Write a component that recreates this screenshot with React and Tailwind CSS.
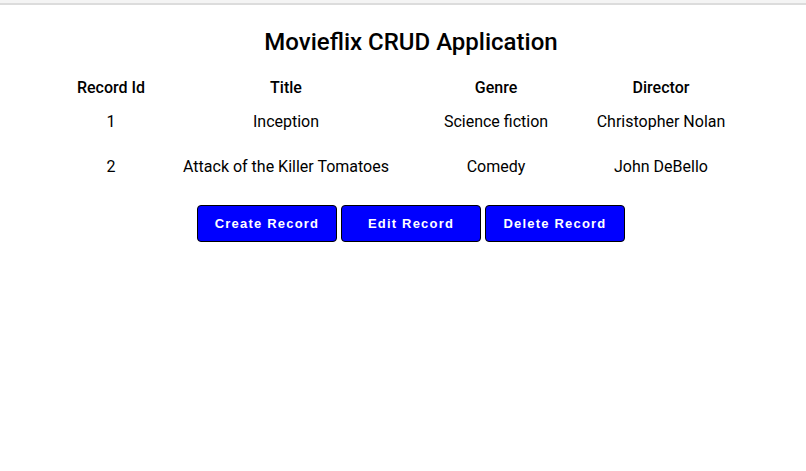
import React from 'react';

const movies = [
  { id: 1, title: 'Inception', genre: 'Science fiction', director: 'Christopher Nolan' },
  { id: 2, title: 'Attack of the Killer Tomatoes', genre: 'Comedy', director: 'John DeBello' },
];

const ActionButton = ({ children }) => (
  <button className="w-[140px] h-[37px] bg-[#0000ff] border border-black rounded-[4px] text-white text-[13px] font-semibold tracking-[1.2px] font-['Liberation_Sans',Arial,sans-serif]">
    {children}
  </button>
);

const App = () => {
  return (
    <div className="min-h-[471px] bg-white text-black font-['Roboto',sans-serif]">
      <div className="h-[5px] bg-[#f4f4f4] border-b-2 border-[#dcdcdc]" />
      <h1 className="mt-[21px] pl-[16px] text-center text-[24px] leading-[32px] font-medium">Movieflix CRUD Application</h1>

      <table className="mx-auto mt-[18px] w-[680px] table-fixed text-[16px]">
        <colgroup>
          <col className="w-[96px]" />
          <col className="w-[254px]" />
          <col className="w-[166px]" />
          <col className="w-[164px]" />
        </colgroup>
        <thead>
          <tr className="h-[24px]">
            <th className="font-medium">Record Id</th>
            <th className="font-medium">Title</th>
            <th className="font-medium">Genre</th>
            <th className="font-medium">Director</th>
          </tr>
        </thead>
        <tbody>
          {movies.map((m, i) => (
            <tr key={m.id} className={i === 0 ? 'h-[44px]' : 'h-[46px]'}>
              <td className="text-center">{m.id}</td>
              <td className="text-center">{m.title}</td>
              <td className="text-center">{m.genre}</td>
              <td className="text-center">{m.director}</td>
            </tr>
          ))}
        </tbody>
      </table>

      <div className="mt-[15px] pl-[16px] flex justify-center gap-[4px]">
        <ActionButton>Create Record</ActionButton>
        <ActionButton>Edit Record</ActionButton>
        <ActionButton>Delete Record</ActionButton>
      </div>
    </div>
  );
};

export default App;
